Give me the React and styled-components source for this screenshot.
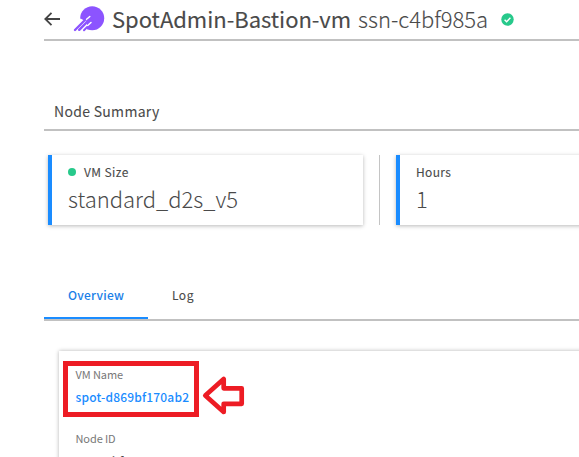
import React from "react";
import styled, { createGlobalStyle } from "styled-components";

const Global = createGlobalStyle`
  * { box-sizing: border-box; }
  body {
    margin: 0;
    background: #fff;
    color: #4a4a4a;
    font-family: "Noto Sans CJK SC", "Noto Sans", sans-serif;
    overflow: hidden;
  }
`;

const Page = styled.main`
  width: 579px;
  height: 457px;
  padding-left: 44px;
  overflow: hidden;
`;

const Header = styled.header`
  display: flex;
  height: 41px;
  border-bottom: 2px solid #c1c1c1;
`;

const BackIcon = styled.svg`
  flex: none;
  width: 17px;
  height: 15px;
  margin-top: 11px;
`;

const Logo = styled.svg`
  flex: none;
  width: 32px;
  height: 28px;
  margin: 5px 0 0 12px;
`;

const CheckIcon = styled.svg`
  flex: none;
  width: 13px;
  height: 13px;
  margin: 13px 0 0 13px;
`;

const Text = styled.span`
  display: block;
  flex: none;
  white-space: nowrap;
  width: ${(p) => p.$w}px;
  font-size: ${(p) => p.$size}px;
  line-height: ${(p) => p.$lh}px;
  font-weight: ${(p) => p.$weight || 400};
  letter-spacing: ${(p) => p.$track || 0}px;
  color: ${(p) => p.$color || "#4a4a4a"};
  -webkit-text-stroke: ${(p) => p.$stroke || 0}px currentColor;
`;

const Title = styled(Text).attrs({ as: "h1" })`
  margin: 2px 8px 0 7px;
`;

const NodeName = styled(Text)`
  margin-top: 2px;
`;

const SectionHead = styled.div`
  height: 34px;
  margin-top: 56px;
  padding-left: 10px;
  border-bottom: 2px solid #c1c1c1;
`;

const Cards = styled.section`
  display: flex;
  gap: 16px;
  height: 70px;
  margin: 24px 0 0 4px;
`;

const Card = styled.article`
  flex: none;
  width: ${(p) => p.$width}px;
  padding: 7px 16px 0;
  border-left: 4px solid #1a8cff;
  box-shadow: 0 1px 4px rgba(0, 0, 0, 0.28);
`;

const CardLabel = styled.div`
  display: flex;
  align-items: center;
  gap: 8px;
  height: 20px;
`;

const Dot = styled.i`
  width: 8px;
  height: 8px;
  border-radius: 50%;
  background: #27c98b;
`;

const Divider = styled.div`
  flex: none;
  width: 1px;
  background: #c4c4c4;
`;

const Tabs = styled.nav`
  display: flex;
  height: 45px;
  margin-top: 51px;
  border-bottom: 2px solid #c1c1c1;
`;

const Tab = styled.div`
  height: 43px;
  padding: 9px 24px 0;
  border-bottom: ${(p) => (p.$active ? "2px solid #1a8cff" : "0")};
`;

const Details = styled.section`
  position: relative;
  width: 560px;
  height: 140px;
  margin: 30px 0 0 15px;
  padding: 13px 0 0 16.5px;
  box-shadow: 0 0 4px rgba(0, 0, 0, 0.3);
`;

const Field = styled.div`
  display: flex;
  flex-direction: column;
  gap: 1px;
  height: 64px;
`;

const Highlight = styled.div`
  position: absolute;
  left: 4px;
  top: 10px;
  width: 136px;
  height: 56px;
  border: 5px solid #ed1c24;
`;

const Pointer = styled.svg`
  position: absolute;
  left: 142px;
  top: 24px;
  width: 44px;
  height: 41px;
`;

export default function App() {
  return (
    <Page>
      <Global />
      <Header>
        <BackIcon viewBox="0 0 17 15" fill="none" stroke="#444" strokeWidth="1.8">
          <path d="M16 8H1.5M7.5 1.8 1.3 8l6.2 6.2" />
        </BackIcon>
        <Logo viewBox="0 0 32 28">
          <circle cx="19.2" cy="13.3" r="12" fill="#8c54ff" />
          <path d="M0 28V20l7.500-6.500L14 17v11z" fill="#fff" />
          <g fill="none" strokeLinecap="round">
            <path d="M7 20 16.800 11.500M12 23l6-5.500" stroke="#fff" strokeWidth="1.5" />
            <path d="M2 25 12 15M6.200 24.800l9-9" stroke="#8c54ff" strokeWidth="2.4" />
            <path d="M11 25.200l3.200-3.200" stroke="#8c54ff" strokeWidth="2" />
          </g>
        </Logo>
        <Title $size={22} $lh={32} $stroke={0.12} $track={-0.02} $w={238}>SpotAdmin-Bastion-vm</Title>
        <NodeName $size={22} $lh={32} $weight={300} $stroke={0.1} $w={130}>ssn-c4bf985a</NodeName>
        <CheckIcon viewBox="0 0 13 13">
          <circle cx="6.5" cy="6.5" r="6.2" fill="#27c98b" />
          <path d="m3.6 6.7 2 2 3.8-4" fill="none" stroke="#fff" strokeWidth="1.4" />
        </CheckIcon>
      </Header>
      <SectionHead>
        <Text $size={14} $lh={28} $stroke={0.08} $track={0.3} $w={106}>Node Summary</Text>
      </SectionHead>
      <Cards>
        <Card $width={315}>
          <CardLabel>
            <Dot />
            <Text $size={12} $lh={20} $stroke={0.1} $track={0.38} $w={60}>VM Size</Text>
          </CardLabel>
          <Text $size={22} $lh={33} $weight={300} $w={171}>standard_d2s_v5</Text>
        </Card>
        <Divider />
        <Card $width={315}>
          <CardLabel>
            <Text $size={12} $lh={20} $stroke={0.1} $track={0.35} $w={60}>Hours</Text>
          </CardLabel>
          <Text $size={22} $lh={33} $weight={300} $w={20}>1</Text>
        </Card>
      </Cards>
      <Tabs>
        <Tab $active>
          <Text $size={12} $lh={20} $weight={500} $track={0.25} $w={56} $color="#1a7fe8">Overview</Text>
        </Tab>
        <Tab>
          <Text $size={12} $lh={20} $stroke={0.1} $track={0.5} $w={23}>Log</Text>
        </Tab>
      </Tabs>
      <Details>
        <Field>
          <Text $size={11} $lh={20} $w={60} $track={-0.08} $color="#777">VM Name</Text>
          <Text $size={12} $lh={24} $weight={500} $track={0.18} $w={115} $color="#1a8cff">spot-d869bf170ab2</Text>
        </Field>
        <Field>
          <Text $size={11} $lh={20} $w={60} $track={-0.1} $color="#777">Node ID</Text>
          <Text $size={12} $lh={24} $weight={500} $w={115}>ssn-c4bf985a</Text>
        </Field>
        <Highlight />
        <Pointer viewBox="0 0 44 41" fill="none" stroke="#ed1c24" strokeWidth="4.7">
          <path d="M4.300 20.500 22.700 4v9.300h18v15.500h-18V37Z" strokeLinejoin="round" />
        </Pointer>
      </Details>
    </Page>
  );
}
